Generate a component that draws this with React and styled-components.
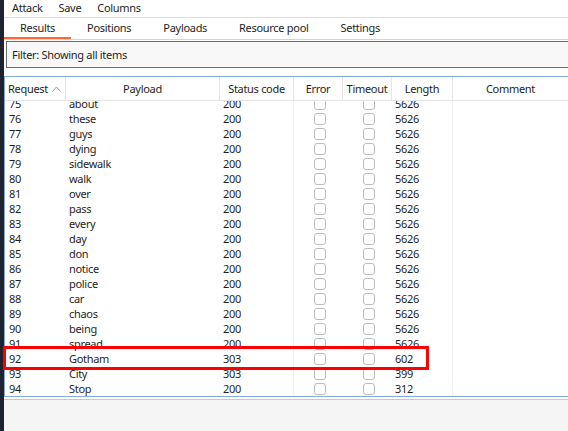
import React from 'react';
import styled, { createGlobalStyle } from 'styled-components';

const GlobalStyle = createGlobalStyle`
*{
  margin: 0;
  padding: 0;
  box-sizing: border-box;
}
body{
  font-family: "Noto Sans", "Open Sans", sans-serif;
  font-size: 11px;
  letter-spacing: -0.3px;
  color: #1e1e1e;
  background: #ffffff;
  overflow: hidden;
}
`;

const Shell = styled.div`
  display: flex;
  width: 568px;
  height: 431px;
`;

const Strip = styled.div`
  width: 4px;
  background: #1f2330;
`;

const Main = styled.div`
  flex: 1;
  display: flex;
  flex-direction: column;
  min-width: 0;
`;

const MenuBar = styled.div`
  display: flex;
  gap: 16px;
  height: 18px;
  padding-left: 8px;
  align-items: center;
  border-bottom: 1px solid #dcdcdc;
  padding-bottom: 2px;
`;

const TabBar = styled.div`
  display: flex;
  height: 22px;
  border-bottom: 1px solid #d4d4d4;
`;

const Tab = styled.div`
  padding: 0 16px;
  display: flex;
  align-items: center;
  border-bottom: 2px solid ${p => (p.active ? '#ff6633' : 'transparent')};
`;

const FilterArea = styled.div`
  padding: 1px 0 8px 2px;
  background: #ffffff;
`;

const FilterBox = styled.div`
  height: 27px;
  border: 1px solid #6e6e6e;
  border-right: none;
  background: #f8f8f8;
  display: flex;
  align-items: center;
  padding-left: 5px;
`;

const Table = styled.div`
  position: relative;
  border-top: 1px solid #84aadc;
  border-left: 1px solid #84aadc;
  border-bottom: 1px solid #84aadc;
`;

const cols = '60px 154px 74px 49px 49px 61px 1fr';

const HeadRow = styled.div`
  display: grid;
  grid-template-columns: ${cols};
  height: 24px;
  border-bottom: 1px solid #e4e4e4;
`;

const HeadCell = styled.div`
  display: flex;
  align-items: center;
  justify-content: ${p => (p.left ? 'flex-start' : 'center')};
  padding-left: ${p => (p.left ? '3px' : '0')};
  border-left: ${p => (p.first ? 'none' : '1px solid #e6e6e6')};
  gap: 4px;
`;

const Body = styled.div`
  height: 295px;
  overflow: hidden;
`;

const Rows = styled.div`
  margin-top: -5px;
`;

const Row = styled.div`
  display: grid;
  grid-template-columns: ${cols};
  height: 15px;
  line-height: 15px;
`;

const Cell = styled.div`
  padding-left: 3px;
  display: flex;
  align-items: center;
  justify-content: ${p => (p.center ? 'center' : 'flex-start')};
  border-left: ${p => (p.line ? '1px solid #f0f0f0' : '1px solid transparent')};
  white-space: nowrap;
`;

const Check = styled.span`
  width: 12px;
  height: 12px;
  border: 1px solid #bdbdbd;
  border-radius: 3px;
  background: #fff;
`;

const Highlight = styled.div`
  position: absolute;
  left: -2px;
  top: 269px;
  width: 426px;
  height: 24px;
  border: 3px solid #ff0000;
  pointer-events: none;
`;

const Footer = styled.div`
  flex: 1;
  margin-top: 2px;
  border-top: 1px solid #c8c8c8;
  background: #f5f5f5;
`;

const Arrow = () => (
  <svg width="9" height="6" viewBox="0 0 9 6">
    <path d="M0.5 5.5 L4.5 1 L8.5 5.5" fill="none" stroke="#9a9a9a" strokeWidth="1" />
  </svg>
);

const data = [
  [75, 'about', 200, 5626],
  [76, 'these', 200, 5626],
  [77, 'guys', 200, 5626],
  [78, 'dying', 200, 5626],
  [79, 'sidewalk', 200, 5626],
  [80, 'walk', 200, 5626],
  [81, 'over', 200, 5626],
  [82, 'pass', 200, 5626],
  [83, 'every', 200, 5626],
  [84, 'day', 200, 5626],
  [85, 'don', 200, 5626],
  [86, 'notice', 200, 5626],
  [87, 'police', 200, 5626],
  [88, 'car', 200, 5626],
  [89, 'chaos', 200, 5626],
  [90, 'being', 200, 5626],
  [91, 'spread', 200, 5626],
  [92, 'Gotham', 303, 602],
  [93, 'City', 303, 399],
  [94, 'Stop', 200, 312],
];

export default function App() {
  return (
    <>
      <GlobalStyle />
      <Shell>
        <Strip />
        <Main>
          <MenuBar>
            <span>Attack</span>
            <span>Save</span>
            <span>Columns</span>
          </MenuBar>
          <TabBar>
            <Tab active>Results</Tab>
            <Tab>Positions</Tab>
            <Tab>Payloads</Tab>
            <Tab>Resource pool</Tab>
            <Tab>Settings</Tab>
          </TabBar>
          <FilterArea>
            <FilterBox>Filter: Showing all items</FilterBox>
          </FilterArea>
          <Table>
            <HeadRow>
              <HeadCell left first>Request <Arrow /></HeadCell>
              <HeadCell>Payload</HeadCell>
              <HeadCell>Status code</HeadCell>
              <HeadCell>Error</HeadCell>
              <HeadCell>Timeout</HeadCell>
              <HeadCell>Length</HeadCell>
              <HeadCell>Comment</HeadCell>
            </HeadRow>
            <Body>
              <Rows>
                {data.map(([n, p, s, l]) => (
                  <Row key={n}>
                    <Cell>{n}</Cell>
                    <Cell>{p}</Cell>
                    <Cell>{s}</Cell>
                    <Cell center line><Check /></Cell>
                    <Cell center><Check /></Cell>
                    <Cell>{l}</Cell>
                    <Cell line />
                  </Row>
                ))}
              </Rows>
            </Body>
            <Highlight />
          </Table>
          <Footer />
        </Main>
      </Shell>
    </>
  );
}
